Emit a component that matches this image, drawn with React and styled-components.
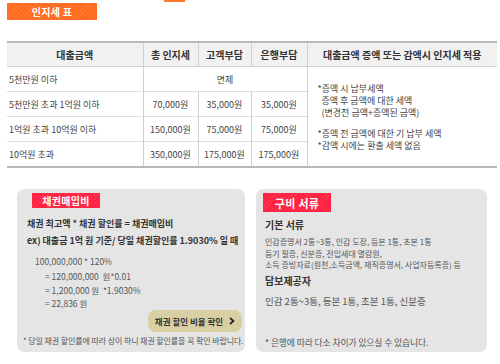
import React from 'react';
import styled, { createGlobalStyle } from 'styled-components';

const GlobalStyle = createGlobalStyle`
  html, body {
    margin: 0;
    padding: 0;
    background: #fff;
    font-family: "Noto Sans CJK KR", "Noto Sans", sans-serif;
    color: #333;
  }
`;

const Page = styled.div`
  width: 500px;
  height: 364px;
  overflow: hidden;
`;

const TabEdge = styled.div`
  width: 21px;
  height: 2px;
  margin-left: 164px;
  background: #ff7a2e;
`;

const Badge = styled.div`
  display: flex;
  align-items: center;
  justify-content: center;
  width: ${p => p.w}px;
  height: ${p => p.h}px;
  margin: ${p => p.m};
  color: #fff;
  font-size: ${p => p.fs || 10}px;
  font-weight: 700;
  letter-spacing: 0.3px;
  background: ${p => p.color};
  background-image: repeating-linear-gradient(
    135deg,
    rgba(255, 255, 255, 0.1) 0 1px,
    rgba(255, 255, 255, 0) 1px 3px
  );
`;

const Table = styled.table`
  margin: 21px 0 0 7px;
  width: 490px;
  border-collapse: collapse;
  border-top: 2px solid #b9b9b9;
  border-bottom: 2px solid #b9b9b9;
  table-layout: fixed;
  font-size: 9px;
  color: #444;
`;

const Th = styled.th`
  height: 23px;
  padding: 0;
  background: #f1f1f1;
  font-size: 10px;
  font-weight: 700;
  color: #333;
  border-bottom: 1px solid #d0d0d0;
  border-left: ${p => (p.first ? 'none' : '1px solid #d0d0d0')};
  text-align: center;
`;

const Td = styled.td`
  height: ${p => p.h || 24}px;
  padding: ${p => (p.left ? '0 0 0 2px' : '0')};
  text-align: ${p => (p.left ? 'left' : 'center')};
  border-top: 1px solid #dedede;
  border-left: ${p => (p.first ? 'none' : '1px solid #d0d0d0')};
  white-space: nowrap;
`;

const NoteCell = styled.td`
  padding: 2px 0 0 10px;
  vertical-align: middle;
  border-left: 1px solid #d0d0d0;
  font-size: 9px;
  line-height: 11.6px;
  color: #444;
`;

const NoteLine = styled.div`
  padding-left: ${p => (p.indent ? 4 : 0)}px;
  height: ${p => (p.gap ? 10 : 11.8)}px;
`;

const Boxes = styled.div`
  display: flex;
  gap: 11px;
  margin: 21px 0 0 17px;
`;

const Box = styled.div`
  width: ${p => p.w}px;
  height: 163px;
  box-sizing: border-box;
  background: #e5e5e5;
  border-radius: 7px;
  padding-top: 4px;
  display: flex;
  flex-direction: column;
`;

const BoldLine = styled.div`
  font-size: ${p => p.fs || 9}px;
  font-weight: 700;
  color: #333;
  margin: ${p => p.m};
  line-height: 14px;
  white-space: nowrap;
`;

const Formula = styled.div`
  margin: ${p => p.m};
  font-size: 8.5px;
  line-height: 13px;
  color: #555;
  white-space: nowrap;
`;

const Plain = styled.div`
  margin: ${p => p.m};
  font-size: ${p => p.fs || 8}px;
  line-height: ${p => (p.fs ? 14 : 11.6)}px;
  color: #555;
  white-space: nowrap;
`;

const CheckButton = styled.button`
  align-self: flex-end;
  margin: 0 3px 0 0;
  width: 94px;
  height: 22px;
  border: none;
  border-radius: 8px;
  background: #d8d0a3;
  font-family: inherit;
  font-size: 8.5px;
  font-weight: 700;
  color: #333;
  display: flex;
  align-items: center;
  justify-content: center;
  gap: 6px;
  padding: 0;
`;

const Footnote = styled.div`
  margin: ${p => p.m};
  font-size: ${p => p.fs || 8}px;
  line-height: 10px;
  color: #555;
  white-space: nowrap;
  letter-spacing: -0.1px;
`;

const Chevron = () => (
  <svg width="6" height="8" viewBox="0 0 6 8">
    <path d="M1 0.8 L4.4 4 L1 7.2" fill="none" stroke="#222" strokeWidth="1.8" />
  </svg>
);

const rows = [
  { label: '5천만원 초과 1억원 이하', total: '70,000원', customer: '35,000원', bank: '35,000원' },
  { label: '1억원 초과 10억원 이하', total: '150,000원', customer: '75,000원', bank: '75,000원' },
  { label: '10억원 초과', total: '350,000원', customer: '175,000원', bank: '175,000원' },
];

export default function App() {
  return (
    <Page>
      <GlobalStyle />
      <TabEdge />
      <Badge w={90} h={17} m="1px 0 0 7px" color="#ff6a1c">인지세 표</Badge>
      <Table>
        <colgroup>
          <col style={{ width: 136 }} />
          <col style={{ width: 55 }} />
          <col style={{ width: 53 }} />
          <col style={{ width: 56 }} />
          <col />
        </colgroup>
        <thead>
          <tr>
            <Th first>대출금액</Th>
            <Th>총 인지세</Th>
            <Th>고객부담</Th>
            <Th>은행부담</Th>
            <Th>대출금액 증액 또는 감액시 인지세 적용</Th>
          </tr>
        </thead>
        <tbody>
          <tr>
            <Td first left h={23}>5천만원 이하</Td>
            <Td colSpan={3}>면제</Td>
            <NoteCell rowSpan={4}>
              <NoteLine>*증액 시 납부세액</NoteLine>
              <NoteLine indent>증액 후 금액에 대한 세액</NoteLine>
              <NoteLine indent>(변경전 금액+증액된 금액)</NoteLine>
              <NoteLine gap />
              <NoteLine>*증액 전 금액에 대한 기 납부 세액</NoteLine>
              <NoteLine>*감액 시에는 환출 세액 없음</NoteLine>
            </NoteCell>
          </tr>
          {rows.map(r => (
            <tr key={r.label}>
              <Td first left>{r.label}</Td>
              <Td>{r.total}</Td>
              <Td>{r.customer}</Td>
              <Td>{r.bank}</Td>
            </tr>
          ))}
        </tbody>
      </Table>

      <Boxes>
        <Box w={228}>
          <Badge w={68} h={15} m="0 0 0 15px" color="#ff1f3f">채권매입비</Badge>
          <BoldLine m="9px 0 0 10px">채권 최고액 * 채권 할인률 = 채권매입비</BoldLine>
          <BoldLine m="3px 0 0 10px">ex) 대출금 1억 원 기준/ 당일 채권할인률 1.9030% 일 때</BoldLine>
          <Formula m="7px 0 0 18px">100,000,000 * 120%</Formula>
          <Formula m="2px 0 0 28px">= 120,000,000&nbsp;&nbsp;원*0.01</Formula>
          <Formula m="1px 0 0 28px">= 1,200,000 원&nbsp;&nbsp;*1.9030%</Formula>
          <Formula m="0 0 0 28px">= 22,836 원</Formula>
          <CheckButton>
            채권 할인 비율 확인
            <Chevron />
          </CheckButton>
          <Footnote m="4px 0 0 6px">* 당일 채권 할인률에 따라 상이 하니 채권 할인률을 꼭 확인 바랍니다.</Footnote>
        </Box>
        <Box w={231}>
          <Badge w={68} h={19} m="0 0 0 7px" fs={11} color="#ff1f3f">구비 서류</Badge>
          <BoldLine m="6px 0 0 9px" fs={10}>기본 서류</BoldLine>
          <Plain m="4px 0 0 9px">인감증명서 2통~3통, 인감 도장, 등본 1통, 초본 1통</Plain>
          <Plain m="0 0 0 9px">등기 필증, 신분증, 전입세대 열람원,</Plain>
          <Plain m="0 0 0 9px">소득 증빙자료(원천,소득금액, 재직증명서, 사업자등록증) 등</Plain>
          <BoldLine m="3px 0 0 9px" fs={10}>담보제공자</BoldLine>
          <Plain m="6px 0 0 9px" fs={9.5}>인감 2통~3통, 등본 1통, 초본 1통, 신분증</Plain>
          <Footnote m="30px 0 0 9px" fs={8.8}>* 은행에 따라 다소 차이가 있으실 수 있습니다.</Footnote>
        </Box>
      </Boxes>
    </Page>
  );
}
